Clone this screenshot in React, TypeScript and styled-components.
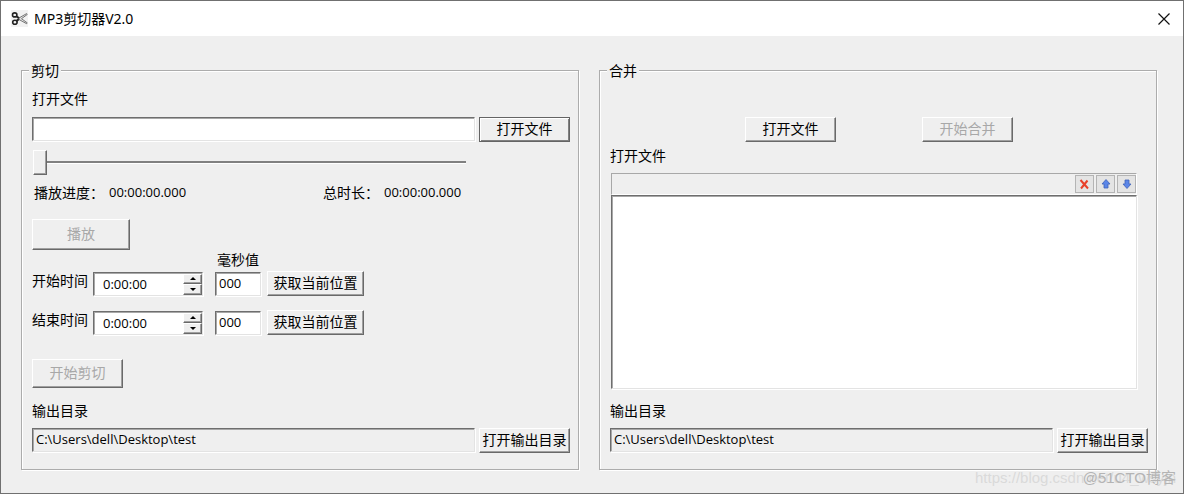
import React, { useState } from "react";
import styled, { createGlobalStyle, css } from "styled-components";

const titleFont = `"Noto Sans", "Noto Sans CJK SC", sans-serif`;
const latin = `"Open Sans", "Noto Sans", "Noto Sans CJK SC", sans-serif`;
const cjk = `"Noto Sans CJK SC", "Noto Sans", sans-serif`;

const GlobalStyle = createGlobalStyle`
  *, *::before, *::after { box-sizing: border-box; }
  body { margin: 0; background: #efefef; color: #000; font: 14px/18px ${cjk}; }
  button, input { font: inherit; color: inherit; margin: 0; }
`;

const sunken = css`
  border: 1px solid;
  border-color: #6e6e6e #e3e3e3 #e3e3e3 #6e6e6e;
  box-shadow: inset 1px 1px 0 #a8a8a8, 1px 1px 0 #fff;
`;
const raised = css`
  border: 1px solid;
  border-color: #fff #696969 #696969 #fff;
  box-shadow: inset -1px -1px 0 #a0a0a0;
`;
const valueText = css`
  font-family: ${latin};
  font-size: 13px;
`;

const Window = styled.div`
  position: relative;
  display: flex;
  flex-direction: column;
  min-height: 100vh;
  border: 1px solid #707070;
  background: #efefef;
`;
const TitleBar = styled.header`
  display: flex;
  align-items: center;
  gap: 6px;
  height: 35px;
  padding: 0 13px 0 10px;
  background: #fff;
`;
const Title = styled.h1`
  flex: 1;
  margin: 0;
  font: 400 14px/18px ${titleFont};
`;
const CloseButton = styled.button`
  display: flex;
  padding: 0;
  border: 0;
  background: none;
`;
const Panels = styled.main`
  flex: 1;
  display: grid;
  grid-template-columns: 1fr 1fr;
  gap: 20px;
  padding: 25px 26px 23px 20px;
`;
const Group = styled.fieldset`
  display: flex;
  flex-direction: column;
  min-width: 0;
  margin: 0;
  padding: 0 8px 16px 10px;
  border: 1px solid #acacac;
  box-shadow: 1px 1px 0 #fff, inset 1px 1px 0 #fff;
`;
const Legend = styled.legend`
  margin-left: -3px;
  padding: 0 2px;
  background: #efefef;
`;
const Label = styled.label`
  align-self: flex-start;
  white-space: nowrap;
`;
const Row = styled.div<{ $top?: number }>`
  display: flex;
  gap: 4px;
  margin-top: ${(p) => p.$top ?? 9}px;
`;
const Field = styled.input`
  ${sunken}
  ${valueText}
  min-width: 0;
  width: 100%;
  height: 24px;
  padding: 0 3px 2px;
  border-radius: 0;
  outline: 0;
  background: ${(p) => (p.readOnly ? "#efefef" : "#fff")};
`;
const Button = styled.button<{ $focus?: boolean; $w?: number; $h?: number }>`
  ${raised}
  flex: none;
  width: ${(p) => p.$w ?? 91}px;
  height: ${(p) => p.$h ?? 25}px;
  padding: 0 0 4px;
  border-radius: 0;
  background: #efefef;
  white-space: nowrap;
  ${(p) =>
    p.$focus &&
    css`
      border-color: #646464;
      box-shadow: inset 1px 1px 0 #fff, inset -1px -1px 0 #808080;
    `}
  &:disabled { color: #a8a8a8; }
`;
const Slider = styled.input`
  appearance: none;
  height: 25px;
  margin: 8px 104px 0 1px;
  background: none;
  &::-webkit-slider-runnable-track {
    height: 3px;
    background: #808080;
    border-bottom: 1px solid #fff;
  }
  &::-webkit-slider-thumb {
    ${raised}
    appearance: none;
    width: 14px;
    height: 25px;
    margin-top: -11px;
    background: #efefef;
  }
`;
const Times = styled.div`
  display: grid;
  grid-template-columns: 289px 1fr;
  margin: 8px 0 18px 2px;
`;
const Time = styled.div`
  display: flex;
  gap: 5px;
`;
const Value = styled.output`
  ${valueText}
`;
const MsLabel = styled.span`
  margin: 0 0 3px 185px;
`;
const TimeGrid = styled.div`
  display: grid;
  grid-template-columns: 61px 122px 52px 97px;
  row-gap: 14px;
  justify-content: start;
  align-items: center;
`;
const Spin = styled.div`
  ${sunken}
  display: flex;
  width: 110px;
  height: 24px;
  background: #fff;
`;
const SpinInput = styled.input`
  ${valueText}
  flex: 1;
  min-width: 0;
  padding: 0 0 0 9px;
  border: 0;
  outline: 0;
  background: none;
`;
const Arrows = styled.div`
  display: grid;
  grid-template-rows: 1fr 1fr;
  width: 19px;
  padding-top: 1px;
`;
const Arrow = styled.button`
  ${raised}
  display: flex;
  align-items: center;
  justify-content: center;
  padding: 0;
  background: #efefef;
`;
const MsField = styled(Field)`
  width: 46px;
`;
const Output = styled.div`
  display: flex;
  flex-direction: column;
  margin-top: auto;
  padding-top: 12px;
`;
const MergeActions = styled.div`
  display: flex;
  justify-content: center;
  gap: 86px;
  margin: 38px 0 4px;
`;
const ListBox = styled.section`
  flex: 1;
  display: flex;
  flex-direction: column;
  margin: 9px 11px 0 1px;
`;
const ListTools = styled.div`
  display: flex;
  justify-content: flex-end;
  gap: 2px;
  height: 22px;
  padding: 1px 0;
  border: 1px solid;
  border-color: #a8a8a8 #fff #fff #a8a8a8;
`;
const Tool = styled.button`
  display: flex;
  align-items: center;
  justify-content: center;
  width: 19px;
  height: 18px;
  padding: 0;
  border: 1px solid #b4b4b4;
  background: #e4e4e4;
`;
const FileList = styled.ul`
  ${sunken}
  flex: 1;
  min-height: 180px;
  margin: 0;
  padding: 0;
  background: #fff;
  list-style: none;
`;
const Watermark = styled.div`
  position: absolute;
  right: 7px;
  bottom: 5px;
  display: grid;
  justify-items: end;
  font: 15px/20px "Liberation Sans", "Noto Sans CJK SC", sans-serif;
  pointer-events: none;
  & > span { grid-area: 1 / 1; }
`;
const Url = styled.span`
  color: #dadada;
`;
const Credit = styled.span`
  color: #b4b4b4;
`;

function Scissors() {
  return (
    <svg width="17" height="17" viewBox="0 0 17 17" fill="none" aria-hidden="true">
      <rect width="17" height="17" fill="#f2f2f2" />
      <ellipse cx="3.700" cy="4.900" rx="2.200" ry="2" stroke="#222" strokeWidth="1.600" />
      <ellipse cx="3.900" cy="12.300" rx="2.200" ry="2" stroke="#222" strokeWidth="1.600" />
      <path d="M5.400 6.300L9 8.900M5.600 10.900L9 8.300" stroke="#222" strokeWidth="2" />
      <path
        d="M8 8l7.600-4.400.6.900-5.700 4.200 5.700 4.100-.6.900L8 9.500z"
        stroke="#666"
        strokeWidth=".9"
        fill="#e6e6e6"
      />
    </svg>
  );
}

const Tri = ({ down }: { down?: boolean }) => (
  <svg width="6" height="3" viewBox="0 0 6 3" aria-hidden="true">
    <path d={down ? "M0 0h6L3 3z" : "M0 3h6L3 0z"} fill="#000" />
  </svg>
);

const BlueArrow = ({ down }: { down?: boolean }) => (
  <svg width="10" height="10" viewBox="0 0 10 10" aria-hidden="true">
    <path
      d={down ? "M3 1h4v4h2L5 9.500 1 5h2z" : "M5 .5L9 5H7v4H3V5H1z"}
      fill="#5b86e8"
      stroke="#3f62b8"
      strokeWidth=".8"
    />
  </svg>
);

function TimeRow({ id, label }: { id: string; label: string }) {
  const [time, setTime] = useState("0:00:00");
  const [ms, setMs] = useState("000");
  return (
    <>
      <Label htmlFor={id}>{label}</Label>
      <Spin>
        <SpinInput id={id} value={time} onChange={(e) => setTime(e.target.value)} />
        <Arrows>
          <Arrow type="button" aria-label="增加"><Tri /></Arrow>
          <Arrow type="button" aria-label="减少"><Tri down /></Arrow>
        </Arrows>
      </Spin>
      <MsField aria-labelledby="ms" value={ms} onChange={(e) => setMs(e.target.value)} />
      <Button type="button" $w={97}>获取当前位置</Button>
    </>
  );
}

function OutputFolder({ id }: { id: string }) {
  return (
    <Output>
      <Label htmlFor={id}>输出目录</Label>
      <Row>
        <Field id={id} readOnly value="C:\Users\dell\Desktop\test" />
        <Button type="button">打开输出目录</Button>
      </Row>
    </Output>
  );
}

export default function App() {
  const [file, setFile] = useState("");
  return (
    <Window>
      <GlobalStyle />
      <TitleBar>
        <Scissors />
        <Title>MP3剪切器V2.0</Title>
        <CloseButton type="button" aria-label="关闭">
          <svg width="12" height="12" viewBox="0 0 12 12" aria-hidden="true">
            <path d="M.5.5l11 11M11.500.5L.5 11.500" stroke="#111" strokeWidth="1.200" />
          </svg>
        </CloseButton>
      </TitleBar>
      <Panels>
        <Group>
          <Legend>剪切</Legend>
          <Row $top={10}>
            <Label htmlFor="source">打开文件</Label>
          </Row>
          <Row $top={10}>
            <Field id="source" value={file} onChange={(e) => setFile(e.target.value)} />
            <Button type="button" $focus>打开文件</Button>
          </Row>
          <Slider type="range" min={0} max={100} defaultValue={0} aria-label="播放进度" />
          <Times>
            <Time>播放进度： <Value>00:00:00.000</Value></Time>
            <Time>总时长： <Value>00:00:00.000</Value></Time>
          </Times>
          <Button type="button" disabled $w={98} $h={31}>播放</Button>
          <MsLabel id="ms">毫秒值</MsLabel>
          <TimeGrid>
            <TimeRow id="start" label="开始时间" />
            <TimeRow id="end" label="结束时间" />
          </TimeGrid>
          <Row $top={24}>
            <Button type="button" disabled $h={29}>开始剪切</Button>
          </Row>
          <OutputFolder id="cut-output" />
        </Group>
        <Group>
          <Legend>合并</Legend>
          <MergeActions>
            <Button type="button">打开文件</Button>
            <Button type="button" disabled>开始合并</Button>
          </MergeActions>
          <Label as="span" id="files">打开文件</Label>
          <ListBox>
            <ListTools>
              <Tool type="button" aria-label="删除">
                <svg width="11" height="11" viewBox="0 0 11 11" aria-hidden="true">
                  <path d="M1.500 1l7.500 8.500M8.500 1.500L2 9.500" stroke="#e8402a" strokeWidth="2" />
                </svg>
              </Tool>
              <Tool type="button" aria-label="上移"><BlueArrow /></Tool>
              <Tool type="button" aria-label="下移"><BlueArrow down /></Tool>
            </ListTools>
            <FileList aria-labelledby="files" />
          </ListBox>
          <OutputFolder id="merge-output" />
        </Group>
      </Panels>
      <Watermark>
        <Url>https://blog.csdn.net/u4_wsyjn</Url>
        <Credit>@51CTO博客</Credit>
      </Watermark>
    </Window>
  );
}
